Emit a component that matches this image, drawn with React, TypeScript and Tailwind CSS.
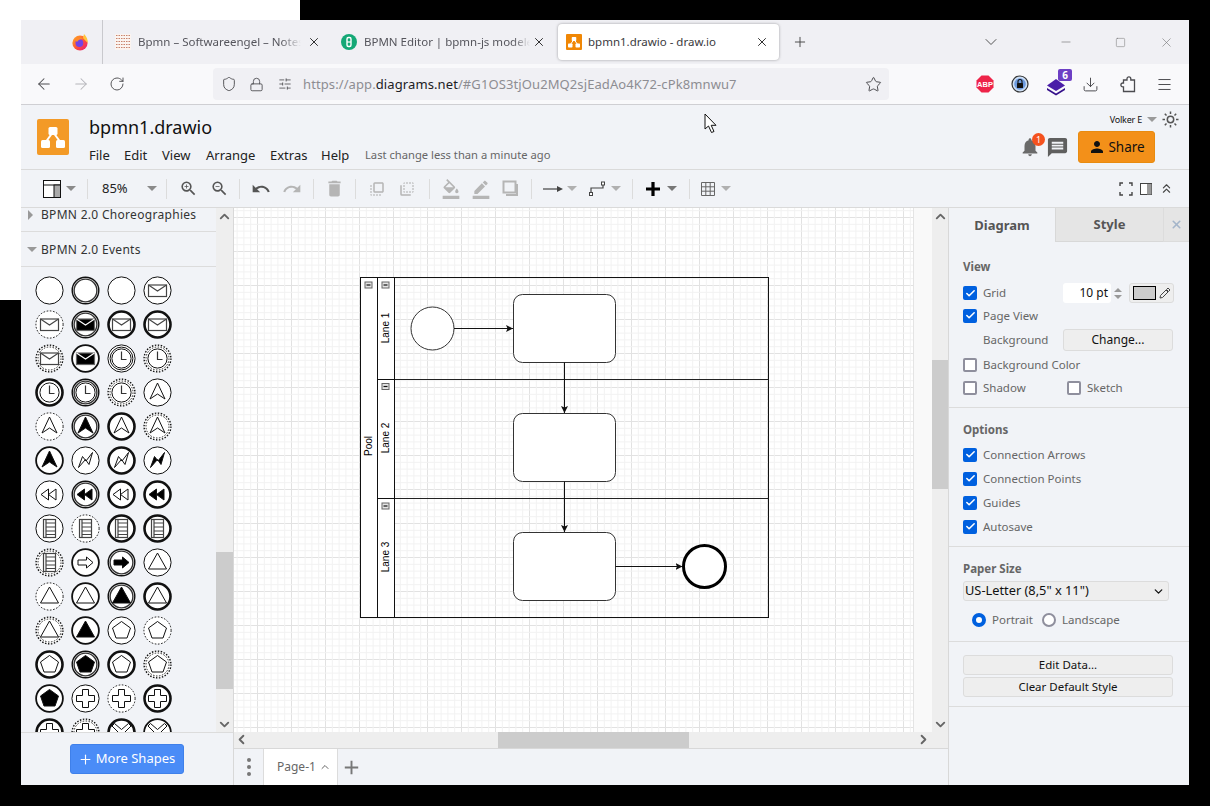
import { ArrowLeft, ArrowRight, Check, ChevronDown, ChevronUp, ChevronLeft, ChevronRight, ChevronsUp, Download, Lock, Menu, Minus, Plus, RotateCw, Shield, SlidersHorizontal, Square, Star, X } from "lucide-react";
import {
  MdAdd,
  MdBorderColor,
  MdDelete,
  MdFlipToBack,
  MdFlipToFront,
  MdFormatColorFill,
  MdMessage,
  MdNotifications,
  MdPerson,
  MdRedo,
  MdUndo,
  MdZoomIn,
  MdZoomOut,
} from "react-icons/md";

const uiFont = "font-['Noto_Sans','Open_Sans',sans-serif]";

// ---- small shared bits

function Caret({ className = "" }: { className?: string }) {
  return <span className={`inline-block h-0 w-0 border-x-[5px] border-t-[5px] border-x-transparent border-t-[#8a8a8a] ${className}`} />;
}

function Sep() {
  return <span className="h-[20px] w-px shrink-0 bg-[#dcdcdc]" />;
}

function Favicon() {
  return (
    <svg width="16" height="16" viewBox="0 0 32 32" className="shrink-0">
      <rect width="32" height="32" rx="2" fill="#f08705" />
      <Logo />
    </svg>
  );
}

function Logo() {
  return (
    <g>
      <path d="M16 11 L8 22 M16 11 L24 22" stroke="#fff" strokeWidth="2" fill="none" />
      <rect x="11.5" y="6" width="9" height="8" rx="1.5" fill="#fff" />
      <rect x="4" y="19" width="9" height="8" rx="1.5" fill="#fff" />
      <rect x="19" y="19" width="9" height="8" rx="1.5" fill="#fff" />
    </g>
  );
}

function Firefox() {
  return (
    <svg width="18" height="18" viewBox="0 0 18 18">
      <defs>
        <linearGradient id="ff" x1="0" y1="0" x2="1" y2="1">
          <stop offset="0" stopColor="#ffb321" />
          <stop offset="0.55" stopColor="#ff4f3a" />
          <stop offset="1" stopColor="#e31587" />
        </linearGradient>
      </defs>
      <circle cx="9" cy="10" r="7.6" fill="url(#ff)" />
      <path d="M13 1 C16 4 17 7 16.6 10 L12 5 Z" fill="#ffc43b" />
      <circle cx="8.4" cy="10" r="3.9" fill="#7542e5" />
      <path d="M4 7 C6 4 10 4 12 6 C9 6 7 7 6 9 Z" fill="#ff8a2a" />
    </svg>
  );
}

// ---- browser chrome

function TabBar() {
  return (
    <div className="flex h-[44px] items-center bg-[#f0f0f4] text-[11.5px] text-[#55555c]">
      <div className="flex h-full w-[82px] items-center justify-center border-r border-[#c9c9cd] pl-[37px]">
        <Firefox />
      </div>
      <div className="ml-[12px] flex w-[212px] items-center">
        <svg width="16" height="16" viewBox="0 0 16 16" className="shrink-0">
          <rect width="16" height="16" fill="#fbf4f0" />
          {[1, 4, 7, 10, 13].map((y) => (
            <path key={y} d={`M1 ${y}.5 H15`} stroke="#c9846c" strokeWidth="1.2" strokeDasharray="1.5 1" />
          ))}
        </svg>
        <span className="ml-[7px] w-[163px] overflow-hidden whitespace-nowrap [mask-image:linear-gradient(to_right,black_88%,transparent)]">Bpmn – Softwareengel – Notes from a</span>
        <X size={14} strokeWidth={1.6} className="ml-[6px] text-[#222]" />
      </div>
      <div className="ml-[14px] flex w-[212px] items-center">
        <svg width="16" height="16" viewBox="0 0 16 16" className="shrink-0">
          <circle cx="8" cy="8" r="8" fill="#14a876" />
          <rect x="6" y="3.5" width="4" height="9" rx="1.5" fill="none" stroke="#fff" strokeWidth="1.4" />
          <path d="M6 8 H10" stroke="#fff" strokeWidth="1.2" />
        </svg>
        <span className="ml-[7px] w-[166px] overflow-hidden whitespace-nowrap [mask-image:linear-gradient(to_right,black_90%,transparent)]">BPMN Editor | bpmn-js modeler</span>
        <X size={14} strokeWidth={1.6} className="ml-[2px] text-[#222]" />
      </div>
      <div className="ml-[5px] flex h-[36px] w-[221px] items-center rounded-[4px] bg-white pl-[8px] shadow-[0_0_3px_rgba(0,0,0,0.35)]">
        <Favicon />
        <span className="ml-[6px] w-[165px] text-[#3a3a40]">bpmn1.drawio - draw.io</span>
        <X size={14} strokeWidth={1.6} className="ml-[2px] text-[#222]" />
      </div>
      <Plus size={16} strokeWidth={1.4} className="ml-[13px] text-[#444]" />
      <ChevronDown size={20} strokeWidth={1.2} className="ml-[173px] text-[#555]" />
      <Minus size={14} strokeWidth={1} className="ml-[58px] text-[#666]" />
      <Square size={11} strokeWidth={1} className="ml-[42px] text-[#666]" />
      <X size={15} strokeWidth={1} className="ml-[33px] text-[#777]" />
    </div>
  );
}

function NavBar() {
  return (
    <div className="flex h-[41px] items-center border-b border-[#cfcfd3] bg-[#f9f9fb] text-[#4c4c50]">
      <ArrowLeft size={18} strokeWidth={1.4} className="ml-[14px]" />
      <ArrowRight size={18} strokeWidth={1.4} className="ml-[19px] text-[#b5b5ba]" />
      <RotateCw size={16} strokeWidth={1.4} className="ml-[19px]" />
      <div className="ml-[88px] flex h-[32px] w-[676px] items-center rounded-[4px] bg-[#f0f0f4]">
        <Shield size={16} strokeWidth={1.4} className="ml-[8px]" />
        <Lock size={15} strokeWidth={1.4} className="ml-[12px]" />
        <SlidersHorizontal size={14} strokeWidth={1.4} className="ml-[14px]" />
        <span className={`ml-[11px] pt-[1px] text-[13px] tracking-[0.1px] text-[#8d8d92] ${uiFont}`}>
          https://app.<span className="text-[#202024]">diagrams.net</span>/#G1OS3tjOu2MQ2sjEadAo4K72-cPk8mnwu7
        </span>
        <Star size={17} strokeWidth={1.4} className="ml-auto mr-[7px]" />
      </div>
      {/* extension icons */}
      <svg width="18" height="18" viewBox="0 0 18 18" className="ml-[87px]">
        <path d="M5.5 0.5 H12.5 L17.5 5.5 V12.5 L12.5 17.5 H5.5 L0.5 12.5 V5.5 Z" fill="#ee2449" />
        <text x="9" y="12" textAnchor="middle" fontSize="7.5" fontWeight="700" fill="#fff" fontFamily="Liberation Sans">ABP</text>
      </svg>
      <svg width="18" height="18" viewBox="0 0 18 18" className="ml-[17px]">
        <circle cx="9" cy="9" r="8" fill="#cfe0f5" stroke="#333" strokeWidth="1.2" />
        <circle cx="9" cy="9" r="5.8" fill="#6d9be0" />
        <rect x="6" y="8" width="6" height="5" rx="0.5" fill="#111" />
        <path d="M7 8 V6.5 a2 2 0 0 1 4 0 V8" stroke="#111" strokeWidth="1.1" fill="none" />
      </svg>
      <div className="relative ml-[18px] h-[20px] w-[22px]">
        <svg width="20" height="20" viewBox="0 0 20 20" className="mt-[2px]">
          <path d="M9 3 L18 9.5 L9 15 L0 9.5 Z" fill="#4a1ea8" />
          <path d="M0 12 L9 17.5 L18 12 L18 14 L9 19.5 L0 14 Z" fill="#35108a" />
        </svg>
        <span className="absolute right-[-3px] top-[-5px] flex h-[12px] w-[14px] items-center justify-center rounded-[2px] bg-[#6d3fc4] text-[10px] font-bold leading-none text-white">6</span>
      </div>
      <Download size={17} strokeWidth={1.4} className="ml-[13px]" />
      <svg width="18" height="18" viewBox="0 0 18 18" className="ml-[21px]" fill="none" stroke="currentColor" strokeWidth="1.3">
        <path d="M3.5 16.5 V11.8 H2.8 a1.9 1.9 0 0 1 0 -3.8 H3.5 V5 H7 V3.8 a1.9 1.9 0 0 1 3.8 0 V5 H14.5 V16.5 Z" />
      </svg>
      <Menu size={17} strokeWidth={1.4} className="ml-[18px]" />
    </div>
  );
}

// ---- draw.io header + toolbar

const menus = [
  ["File", "w-[35px]"],
  ["Edit", "w-[38px]"],
  ["View", "w-[44px]"],
  ["Arrange", "w-[64px]"],
  ["Extras", "w-[51px]"],
  ["Help", "w-[44px]"],
];

function AppHeader() {
  return (
    <div className="relative flex h-[65px] border-b border-[#dadada] bg-[#f1f3f7]">
      <svg width="32" height="36" viewBox="0 0 32 36" className="ml-[16px] mt-[14px] shrink-0">
        <rect width="32" height="36" rx="2" fill="#f39a27" />
        <g transform="translate(0 2)"><Logo /></g>
      </svg>
      <div className="ml-[20px] flex flex-col">
        <div className="mt-[8px] h-[28px] text-[18px] leading-[28px] text-[#111]">bpmn1.drawio</div>
        <div className="mt-[5px] flex items-center text-[13px] leading-[18px] text-[#222]">
          {menus.map(([m, w]) => (
            <span key={m} className={w}>{m}</span>
          ))}
          <span className="ml-[0px] text-[11.2px] text-[#666]">Last change less than a minute ago</span>
        </div>
      </div>
      {/* mouse cursor sits over the page */}
      <svg width="16" height="21" viewBox="0 0 16 21" className="absolute left-[683px] top-[8px]">
        <path d="M1 1 V16 L4.5 13 L7.5 19.5 L10 18.5 L7.2 12.3 H12 Z" fill="#fff" stroke="#111" strokeWidth="1" />
      </svg>
      <div className="ml-auto flex w-[170px] flex-col items-end pr-[10px]">
        <div className="mt-[6px] flex items-center">
          <span className="text-[9px] tracking-[-0.2px] text-[#111]">Volker E</span>
          <Caret className="ml-[5px] !border-t-[#9a9a9a]" />
          <svg width="17" height="17" viewBox="0 0 17 17" className="ml-[5px]" fill="none" stroke="#555" strokeWidth="1.5">
            <circle cx="8.5" cy="8.5" r="3.2" />
            <path d="M8.5 0.5 V3 M8.5 14 V16.5 M0.5 8.5 H3 M14 8.5 H16.5 M2.8 2.8 L4.5 4.5 M12.5 12.5 L14.2 14.2 M2.8 14.2 L4.5 12.5 M12.5 4.5 L14.2 2.8" />
          </svg>
        </div>
        <div className="mt-[3px] flex items-center pr-[24px]">
          <div className="relative mr-[5px]">
            <MdNotifications size={22} className="text-[#6a6a6a]" />
            <span className="absolute right-[-4px] top-[-3px] flex h-[13px] w-[13px] items-center justify-center rounded-full bg-[#f4511e] text-[9px] leading-none text-white">1</span>
          </div>
          <MdMessage size={23} className="mr-[9px] mt-[1px] text-[#5f5f5f]" />
          <div className="flex h-[32px] w-[77px] items-center justify-center rounded-[3px] border border-[#e88b10] bg-[#f39019] text-[13.5px] text-[#111]">
            <MdPerson size={18} className="mr-[2px]" />
            Share
          </div>
        </div>
      </div>
    </div>
  );
}

function ToolBar() {
  const dim = "text-[#b5b5b5]";
  return (
    <div className="flex h-[38px] items-center border-b border-[#dadada] bg-[#f1f3f7] text-[#555]">
      <div className="flex w-[66px] items-center pl-[22px]">
        <svg width="18" height="18" viewBox="0 0 18 18">
          <rect x="0.5" y="0.5" width="17" height="17" fill="#fff" stroke="#111" />
          <path d="M0.5 5 H17.5" stroke="#111" />
          <rect x="11" y="5" width="6.5" height="12.5" fill="#aaa" stroke="#111" />
        </svg>
        <Caret className="ml-[5px]" />
      </div>
      <Sep />
      <div className="flex w-[78px] items-center pl-[14px]">
        <span className="w-[32px] text-[13px] text-[#222]">85%</span>
        <Caret className="ml-[13px]" />
      </div>
      <Sep />
      <div className="flex w-[72px] items-center justify-center gap-[12px] pl-[2px]">
        <MdZoomIn size={19} />
        <MdZoomOut size={19} />
      </div>
      <Sep />
      <div className={`flex w-[73px] items-center justify-center gap-[11px] ${dim}`}>
        <MdUndo size={20} className="text-[#555]" />
        <MdRedo size={20} />
      </div>
      <Sep />
      <div className={`flex w-[41px] justify-center ${dim}`}>
        <MdDelete size={21} />
      </div>
      <Sep />
      <div className={`flex w-[73px] items-center justify-center gap-[12px] pr-[2px] ${dim}`}>
        <MdFlipToFront size={18} />
        <MdFlipToBack size={18} />
      </div>
      <Sep />
      <div className={`flex w-[101px] items-center justify-center gap-[10px] ${dim}`}>
        <MdFormatColorFill size={20} />
        <MdBorderColor size={20} />
        <svg width="18" height="18" viewBox="0 0 18 18" className="ml-[1px]">
          <rect x="1.5" y="1.5" width="12" height="11" fill="none" stroke="#b5b5b5" strokeWidth="2" />
          <path d="M15 4 V15 H4" fill="none" stroke="#b5b5b5" strokeWidth="2" />
        </svg>
      </div>
      <Sep />
      <div className="flex w-[100px] items-center pl-[10px]">
        <svg width="22" height="12" viewBox="0 0 22 12">
          <path d="M1 6 H17" stroke="#444" strokeWidth="1.2" />
          <path d="M21 6 L15 3 V9 Z" fill="#444" />
        </svg>
        <Caret className="ml-[3px] !border-t-[#b0b0b0]" />
        <svg width="20" height="16" viewBox="0 0 20 16" className="ml-[11px]">
          <path d="M3 12 V7 H15 V3" fill="none" stroke="#444" strokeWidth="1.2" />
          <rect x="1.5" y="11.5" width="3" height="3" fill="#fff" stroke="#444" />
          <rect x="13.5" y="1" width="3" height="3" fill="#fff" stroke="#444" />
        </svg>
        <Caret className="ml-[3px] !border-t-[#b0b0b0]" />
      </div>
      <Sep />
      <div className="flex w-[56px] items-center pl-[12px]">
        <svg width="16" height="16" viewBox="0 0 16 16">
          <path d="M8 1 V15 M1 8 H15" stroke="#000" strokeWidth="3.2" />
        </svg>
        <Caret className="ml-[6px] !border-t-[#777]" />
      </div>
      <Sep />
      <div className="flex items-center pl-[10px]">
        <svg width="16" height="16" viewBox="0 0 16 16">
          <path d="M1.5 1.5 H14.5 V14.5 H1.5 Z M1.5 5.8 H14.5 M1.5 10.2 H14.5 M5.8 1.5 V14.5 M10.2 1.5 V14.5" fill="none" stroke="#666" strokeWidth="1" />
        </svg>
        <Caret className="ml-[5px] !border-t-[#b0b0b0]" />
      </div>
      <div className="ml-auto flex items-center gap-[8px] pr-[15px]">
        <svg width="14" height="14" viewBox="0 0 14 14">
          <path d="M1 4 V1 H4 M10 1 H13 V4 M13 10 V13 H10 M4 13 H1 V10" fill="none" stroke="#444" strokeWidth="1.4" />
        </svg>
        <svg width="12" height="12" viewBox="0 0 12 12" className="ml-[-1px]">
          <rect x="0.5" y="0.5" width="11" height="11" fill="#fff" stroke="#444" />
          <rect x="7" y="1" width="4.5" height="10.5" fill="#999" />
        </svg>
        <ChevronsUp size={15} strokeWidth={1.8} className="ml-[-1px] text-[#444]" />
      </div>
    </div>
  );
}

// ---- sidebar

type Ring = "thin" | "dbl" | "thick" | "med" | "dot" | "dense" | "ddbl";
type Glyph = "" | "env" | "envf" | "clock" | "chev" | "chevf" | "zig" | "zigf" | "rew" | "rewf" | "doc" | "arr" | "arrf" | "tri" | "trif" | "pent" | "pentf" | "plus" | "x";

const events: [Ring, Glyph][] = [
  ["thin", ""], ["dbl", ""], ["thin", ""], ["thin", "env"],
  ["dot", "env"], ["dbl", "envf"], ["thick", "env"], ["thick", "env"],
  ["dense", "env"], ["med", "envf"], ["ddbl", "clock"], ["dense", "clock"],
  ["thick", "clock"], ["dbl", "clock"], ["dense", "clock"], ["thin", "chev"],
  ["dot", "chev"], ["dbl", "chevf"], ["thick", "chev"], ["dense", "chev"],
  ["med", "chevf"], ["thin", "zig"], ["thick", "zig"], ["thin", "zigf"],
  ["thin", "rew"], ["dbl", "rewf"], ["thick", "rew"], ["thick", "rewf"],
  ["thin", "doc"], ["dot", "doc"], ["thick", "doc"], ["thick", "doc"],
  ["dense", "doc"], ["med", "arr"], ["dbl", "arrf"], ["thin", "tri"],
  ["dot", "tri"], ["med", "tri"], ["dbl", "trif"], ["thick", "tri"],
  ["dense", "tri"], ["med", "trif"], ["thin", "pent"], ["dot", "pent"],
  ["thick", "pent"], ["dbl", "pentf"], ["thick", "pent"], ["dense", "pent"],
  ["med", "pentf"], ["thin", "plus"], ["dot", "plus"], ["thick", "plus"],
  ["thick", "plus"], ["dense", "plus"], ["thick", "x"], ["med", "x"],
];

const glyphPaths: Record<string, string> = {
  chev: "M0 -9.5 L7.5 6.5 L0 1.5 L-7.5 6.5 Z",
  zig: "M-7 7 L-3 -4 L0.5 0.5 L7 -8 L3.5 4 L0 -1 Z",
  rew: "M-8.5 0 L-1 -5.5 V5.5 Z M-1 0 L6.5 -5.5 V5.5 Z",
  arr: "M-7.5 -2.5 H1 V-5.5 L7.5 0 L1 5.5 V2.5 H-7.5 Z",
  tri: "M0 -9.5 L9 6.5 H-9 Z",
  pent: "M0 -9 L9 -2.5 L5.5 7.5 H-5.5 L-9 -2.5 Z",
  plus: "M-3 -9 H3 V-3 H9 V3 H3 V9 H-3 V3 H-9 V-3 H-3 Z",
  x: "M-7 -9 L0 -3 L7 -9 L9.5 -6.5 L3 0 L9.5 6.5 L7 9 L0 3 L-7 9 L-9.5 6.5 L-3 0 L-9.5 -6.5 Z",
};

function EventRing({ ring }: { ring: Ring }) {
  const c = { fill: "#fff", stroke: "#111" };
  if (ring === "thin") return <circle r="13.6" {...c} strokeWidth="1" />;
  if (ring === "med") return <circle r="13.4" {...c} strokeWidth="1.8" />;
  if (ring === "thick") return <circle r="13" {...c} strokeWidth="2.6" />;
  if (ring === "dot") return <circle r="13.6" {...c} strokeWidth="1" strokeDasharray="1.6 1.6" />;
  if (ring === "dbl")
    return (
      <g>
        <circle r="13.3" {...c} strokeWidth="1.4" />
        <circle r="11.4" fill="#fff" stroke="#333" strokeWidth="1.4" />
      </g>
    );
  if (ring === "ddbl")
    return (
      <g>
        <circle r="13.6" {...c} strokeWidth="1" />
        <circle r="11.4" fill="#fff" stroke="#111" strokeWidth="1" />
      </g>
    );
  return (
    <g>
      <circle r="13.4" {...c} strokeWidth="1.4" strokeDasharray="1.5 1.5" />
      <circle r="11.5" fill="#fff" stroke="#222" strokeWidth="1" strokeDasharray="1.5 1.5" />
    </g>
  );
}

function EventGlyph({ g }: { g: Glyph }) {
  if (!g) return null;
  if (g === "env" || g === "envf") {
    const filled = g === "envf";
    return (
      <g>
        <rect x="-9" y="-5.5" width="18" height="11.5" fill={filled ? "#000" : "#fff"} stroke={filled ? "#666" : "#444"} strokeWidth="1.2" />
        <path d="M-9 -5.5 L0 0.5 L9 -5.5" fill="none" stroke={filled ? "#fff" : "#444"} strokeWidth="1.1" />
      </g>
    );
  }
  if (g === "clock") {
    return (
      <g>
        <circle r="9.6" fill="#fff" stroke="#111" strokeWidth="1" />
        <path d="M0 -7 V1 H5" fill="none" stroke="#333" strokeWidth="1.2" />
      </g>
    );
  }
  if (g === "doc") {
    return (
      <g fill="none" stroke="#444" strokeWidth="1.2">
        <rect x="-6" y="-9" width="12" height="18" fill="#fff" />
        <path d="M-3.5 -9 V9 M-3.5 -5.5 H6 M-3.5 -1.5 H6 M-3.5 2.5 H6 M-3.5 6 H6" />
      </g>
    );
  }
  const filled = g.endsWith("f");
  const d = glyphPaths[filled ? g.slice(0, -1) : g];
  return <path d={d} fill={filled ? "#000" : "#fff"} stroke="#111" strokeWidth="1" />;
}

function ScrollArrows() {
  return (
    <>
      <ChevronUp size={15} strokeWidth={3} className="absolute left-[1px] top-[1px] text-[#666]" />
      <ChevronDown size={15} strokeWidth={3} className="absolute bottom-[0px] left-[1px] text-[#666]" />
    </>
  );
}

function Sidebar() {
  return (
    <div className="flex w-[213px] shrink-0 flex-col border-r border-[#d8d8d8] bg-[#f1f3f7]">
      <div className="flex h-[524px] overflow-hidden">
        <div className="w-[195px] shrink-0">
          <div className="flex h-[24px] items-start border-b border-[#dcdcdc] pl-[7px] text-[12px] leading-[14px] tracking-[0.3px] text-[#333]">
            <span className="mt-[2px] h-0 w-0 border-y-[5px] border-l-[5px] border-y-transparent border-l-[#999]" />
            <span className="ml-[8px]">BPMN 2.0 Choreographies</span>
          </div>
          <div className="flex h-[35px] items-center border-b border-[#dcdcdc] pl-[6px] pt-[1px] text-[12px] tracking-[0.3px] text-[#333]">
            <span className="h-0 w-0 border-x-[5px] border-t-[5px] border-x-transparent border-t-[#999]" />
            <span className="ml-[4px]">BPMN 2.0 Events</span>
          </div>
          <svg width="195" height="465" viewBox="0 0 195 465" className="block">
            {events.map(([ring, glyph], i) => (
              <g key={i} transform={`translate(${28.5 + (i % 4) * 36} ${23.5 + Math.floor(i / 4) * 34})`}>
                <EventRing ring={ring} />
                <EventGlyph g={glyph} />
              </g>
            ))}
          </svg>
        </div>
        <div className="relative w-[17px] shrink-0 bg-[#eeeeee]">
          <ScrollArrows />
          <div className="mt-[344px] h-[137px] bg-[#cccccc]" />
        </div>
      </div>
      <div className="flex flex-1 items-start justify-center border-t border-[#dcdcdc] pt-[11px] pr-[1px]">
        <div className="flex h-[30px] w-[114px] items-center justify-center rounded-[3px] border border-[#3f80ea] bg-[#4a8cf7] text-[13px] text-white">
          <Plus size={15} strokeWidth={1.8} className="mr-[3px]" />
          More Shapes
        </div>
      </div>
    </div>
  );
}

// ---- canvas

function MinusBox({ x, y }: { x: number; y: number }) {
  return (
    <g>
      <rect x={x - 3.5} y={y - 3} width="7" height="6" fill="#e4e4e4" stroke="#666" strokeWidth="1" />
      <path d={`M${x - 2} ${y} H${x + 2}`} stroke="#111" strokeWidth="1.2" />
    </g>
  );
}

function VText({ x, y, children }: { x: number; y: number; children: string }) {
  return (
    <text x={x} y={y} transform={`rotate(-90 ${x} ${y})`} textAnchor="middle" fontSize="10" fontFamily="Liberation Sans" fill="#000">
      {children}
    </text>
  );
}

function Diagram() {
  // coordinates are page coordinates shifted so that the svg starts at the canvas corner
  const ox = -234;
  const oy = -208;
  return (
    <svg width="679" height="524" viewBox="0 0 679 524" className="block shrink-0 bg-white">
      <defs>
        <pattern id="grid" x="23" y="9" width="34" height="34" patternUnits="userSpaceOnUse">
          {[0.5, 7.3, 14.1, 20.9, 27.7].map((p) => (
            <g key={p}>
              <path d={`M${p} 0 V34`} stroke={p === 0.5 ? "#e2e2e2" : "#f2f2f2"} strokeWidth="1" />
              <path d={`M0 ${p} H34`} stroke={p === 0.5 ? "#e2e2e2" : "#f2f2f2"} strokeWidth="1" />
            </g>
          ))}
        </pattern>
        <marker id="ah" markerWidth="8" markerHeight="8" refX="7" refY="3.5" orient="auto" markerUnits="userSpaceOnUse">
          <path d="M0 0 L7 3.5 L0 7 L1.5 3.5 Z" fill="#111" />
        </marker>
      </defs>
      <rect width="679" height="524" fill="url(#grid)" />
      <g transform={`translate(${ox} ${oy})`} fill="none" stroke="#111" strokeWidth="1">
        <rect x="360.5" y="277.5" width="408" height="340" />
        <path d="M377.5 277.5 V617.5 M394.5 277.5 V617.5 M377.5 379.5 H768.5 M377.5 498.5 H768.5" stroke="#222" />
        <rect x="360.5" y="277.5" width="17" height="340" fill="#fff" stroke="#111" />
        <rect x="377.5" y="277.5" width="17" height="340" fill="#fff" stroke="#111" />
        <path d="M377.5 379.5 H394.5 M377.5 498.5 H394.5" />
        <circle cx="432.5" cy="328.5" r="21.5" fill="#fff" stroke="#333" />
        <rect x="513.5" y="294.5" width="102" height="68" rx="9" fill="#fff" stroke="#333" />
        <rect x="513.5" y="413.5" width="102" height="68" rx="9" fill="#fff" stroke="#333" />
        <rect x="513.5" y="532.5" width="102" height="68" rx="9" fill="#fff" stroke="#333" />
        <circle cx="704.5" cy="566.5" r="21" fill="#fff" stroke="#000" strokeWidth="3" />
        <path d="M454 328.5 H513" markerEnd="url(#ah)" />
        <path d="M564.5 362.5 V413" markerEnd="url(#ah)" />
        <path d="M564.5 481.5 V532" markerEnd="url(#ah)" />
        <path d="M615.5 566.5 H682.5" markerEnd="url(#ah)" />
        <g stroke="none">
          <MinusBox x={368.5} y={285} />
          <MinusBox x={385.5} y={285} />
          <MinusBox x={385.5} y={386.5} />
          <MinusBox x={385.5} y={506} />
          <VText x={372} y={446}>Pool</VText>
          <VText x={389} y={328}>Lane 1</VText>
          <VText x={389} y={438}>Lane 2</VText>
          <VText x={389} y={557}>Lane 3</VText>
        </g>
      </g>
    </svg>
  );
}

function Canvas() {
  return (
    <div className="flex w-[715px] shrink-0 flex-col border-r border-[#d8d8d8]">
      <div className="flex h-[524px]">
        <Diagram />
        <div className="w-[19px] shrink-0 border-l border-[#e4e4e4] bg-[#f9f9f9]" />
        <div className="relative w-[16px] shrink-0 bg-[#eeeeee]">
          <ScrollArrows />
          <div className="mt-[152px] h-[129px] bg-[#cccccc]" />
        </div>
      </div>
      <div className="relative flex h-[17px] border-b border-[#d8d8d8] bg-[#eeeeee]">
        <div className="ml-[264px] h-full w-[191px] bg-[#cccccc]" />
        <ChevronLeft size={15} strokeWidth={3} className="absolute left-[0px] top-[0px] text-[#666]" />
        <ChevronRight size={15} strokeWidth={3} className="absolute left-[682px] top-[0px] text-[#666]" />
      </div>
      <div className="flex flex-1 items-stretch bg-[#f1f3f7] text-[#777]">
        <div className="flex w-[30px] flex-col items-center justify-center gap-[3px] border-r border-[#dcdcdc]">
          <span className="h-[4px] w-[4px] rounded-full bg-[#777]" />
          <span className="h-[4px] w-[4px] rounded-full bg-[#777]" />
          <span className="h-[4px] w-[4px] rounded-full bg-[#777]" />
        </div>
        <div className="flex w-[74px] items-center border-r border-[#dcdcdc] bg-white pl-[13px] text-[12px] text-[#666]">
          Page-1
          <ChevronUp size={12} strokeWidth={2} className="ml-[3px]" />
        </div>
        <MdAdd size={23} className="ml-[2px] self-center" />
      </div>
    </div>
  );
}

// ---- right panel

function CheckBox({ on = false }: { on?: boolean }) {
  return on ? (
    <span className="flex h-[14px] w-[14px] shrink-0 items-center justify-center rounded-[2px] bg-[#0060df]">
      <Check size={11} strokeWidth={3.4} className="text-white" />
    </span>
  ) : (
    <span className="h-[14px] w-[14px] shrink-0 rounded-[2px] border-2 border-[#8f8f9d] bg-white" />
  );
}

function CheckRow({ label, on = false, className = "" }: { label: string; on?: boolean; className?: string }) {
  return (
    <div className={`flex items-center ${className}`}>
      <CheckBox on={on} />
      <span className="ml-[6px] text-[11.5px] text-[#666]">{label}</span>
    </div>
  );
}

function Heading({ children, className = "" }: { children: string; className?: string }) {
  return <div className={`text-[11.5px] font-bold text-[#666] ${className}`}>{children}</div>;
}

function RightPanel() {
  return (
    <div className="flex flex-1 flex-col bg-[#f1f3f7]">
      <div className="flex h-[34px] text-[13px] font-bold text-[#555]">
        <div className="flex w-[106px] items-center justify-center pt-[2px]">Diagram</div>
        <div className="flex w-[108px] items-center justify-center border-b border-l border-[#d8d8d8] bg-[#e5e5e5] pt-[1px]">Style</div>
        <div className="flex flex-1 items-center justify-center border-b border-l border-[#dcdcdc] bg-[#e5e5e5]">
          <X size={13} strokeWidth={3} className="text-[#a4b5ca]" />
        </div>
      </div>
      {/* View */}
      <div className="h-[166px] border-b border-[#dcdcdc] pl-[14px]">
        <Heading className="mt-[16px] h-[18px]">View</Heading>
        <div className="mt-[7px] flex h-[20px] items-center">
          <CheckRow on label="Grid" className="w-[100px]" />
          <div className="flex h-[20px] w-[48px] items-center justify-end rounded-[3px] bg-white pr-[3px] text-[12px] text-[#111]">10 pt</div>
          <div className="ml-[1px] flex h-[20px] w-[12px] flex-col items-center justify-center gap-[3px]">
            <span className="h-0 w-0 border-x-[4px] border-b-[4px] border-x-transparent border-b-[#999]" />
            <span className="h-0 w-0 border-x-[4px] border-t-[4px] border-x-transparent border-t-[#999]" />
          </div>
          <div className="ml-[5px] flex h-[20px] w-[45px] items-center rounded-[3px] border border-[#dcdcdc] bg-[#eeeeee] pl-[3px]">
            <span className="h-[14px] w-[23px] border border-black bg-[#cccccc]" />
            <svg width="12" height="12" viewBox="0 0 12 12" className="ml-[3px]">
              <path d="M1 11 L1.5 8.5 L7 3 L9 5 L3.5 10.5 Z M7.5 2.5 L9 1 L11 3 L9.5 4.5 Z" fill="none" stroke="#444" strokeWidth="1" />
            </svg>
          </div>
        </div>
        <CheckRow on label="Page View" className="mt-[4px] h-[17px]" />
        <div className="mt-[5px] flex h-[22px] items-center">
          <span className="ml-[20px] w-[80px] text-[11.5px] text-[#666]">Background</span>
          <div className="flex h-[22px] w-[110px] items-center justify-center rounded-[3px] border border-[#dcdcdc] bg-[#eeeeee] text-[12px] text-[#111]">Change...</div>
        </div>
        <CheckRow label="Background Color" className="mt-[5px] h-[17px]" />
        <div className="mt-[6px] flex h-[17px] items-center">
          <CheckRow label="Shadow" className="w-[104px]" />
          <CheckRow label="Sketch" />
        </div>
      </div>
      {/* Options */}
      <div className="h-[139px] border-b border-[#dcdcdc] pl-[14px]">
        <Heading className="mt-[13px] h-[18px]">Options</Heading>
        <div className="mt-[7px] flex flex-col gap-[7px]">
          <CheckRow on label="Connection Arrows" className="h-[17px]" />
          <CheckRow on label="Connection Points" className="h-[17px]" />
          <CheckRow on label="Guides" className="h-[17px]" />
          <CheckRow on label="Autosave" className="h-[17px]" />
        </div>
      </div>
      {/* Paper size */}
      <div className="h-[95px] border-b border-[#dcdcdc] pl-[14px]">
        <Heading className="mt-[13px] h-[18px]">Paper Size</Heading>
        <div className="mt-[3px] flex h-[20px] w-[206px] items-center rounded-[3px] border border-[#dcdcdc] bg-[#eeeeee] pl-[1px] pr-[3px] text-[12.8px] text-[#111]">
          US-Letter (8,5" x 11")
          <ChevronDown size={13} strokeWidth={2.4} className="ml-auto" />
        </div>
        <div className="mt-[10px] flex h-[17px] items-center pl-[9px] text-[11.5px] text-[#666]">
          <span className="h-[14px] w-[14px] rounded-full border-[4px] border-[#0060df] bg-white" />
          <span className="ml-[6px] w-[50px]">Portrait</span>
          <span className="h-[14px] w-[14px] rounded-full border-2 border-[#8f8f9d] bg-white" />
          <span className="ml-[6px]">Landscape</span>
        </div>
      </div>
      {/* Buttons */}
      <div className="h-[65px] border-b border-[#dcdcdc] pl-[14px] pt-[13px] text-[11.5px] text-[#111]">
        <div className="flex h-[20px] w-[210px] items-center justify-center rounded-[3px] border border-[#dcdcdc] bg-[#eeeeee]">Edit Data...</div>
        <div className="mt-[2px] flex h-[20px] w-[210px] items-center justify-center rounded-[3px] border border-[#dcdcdc] bg-[#eeeeee]">Clear Default Style</div>
      </div>
    </div>
  );
}

export default function App() {
  return (
    <div className={`relative h-[806px] w-[1210px] overflow-hidden bg-black pl-[21px] pt-[20px] ${uiFont}`}>
      <div className="absolute left-0 top-0 h-[300px] w-[300px] bg-white" />
      <div className="relative flex h-[765px] w-[1168px] flex-col bg-[#f1f3f7]">
        <TabBar />
        <NavBar />
        <AppHeader />
        <ToolBar />
        <div className="flex flex-1">
          <Sidebar />
          <Canvas />
          <RightPanel />
        </div>
      </div>
    </div>
  );
}
